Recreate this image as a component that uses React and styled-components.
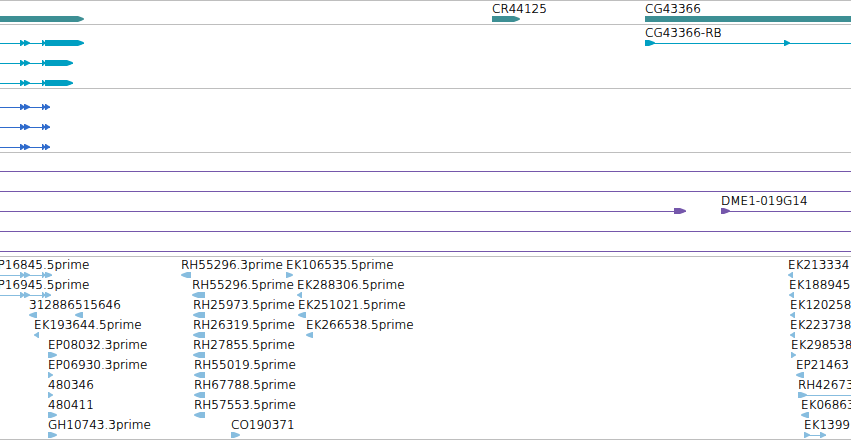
import React from "react";
import styled, { createGlobalStyle } from "styled-components";

const GlobalStyle = createGlobalStyle`
  body {
    margin: 0;
    background: #ffffff;
    overflow: hidden;
  }
`;

const Browser = styled.main`
  display: flex;
  flex-direction: column;
  border-bottom: 1px solid #bebebe;
  font-family: "DejaVu Sans", sans-serif;
  font-size: 12px;
  font-weight: 200;
  line-height: 14px;
  color: #000000;
`;

const Track = styled.section`
  padding: 1px 0 2px;
  border-top: 1px solid #bebebe;
  color: ${(p) => p.$color};

  &:last-child {
    padding-bottom: 1px;
  }
`;

const Lane = styled.div`
  position: relative;
  height: 20px;
  overflow: hidden;
`;

/* A feature sits at its sequence position along the lane. */
const Feature = styled.div`
  position: absolute;
  top: 0;
  display: flex;
  flex-direction: column;
`;

const Label = styled.span`
  height: 14px;
  color: #000000;
  text-shadow: 0 0 0 #000000;
  white-space: nowrap;
`;

const Glyph = styled.svg`
  display: block;
  flex: none;
  fill: currentColor;
`;

const FAR = 4000;

function exonPath(from, to, reverse) {
  const tip = Math.min(6, to - from - 1);
  if (reverse) {
    const neck = from + tip;
    return `M${to} 0H${neck}L${from + 2} 1.5L${from} 2.5V3.5L${from + 2} 4.5L${neck} 6H${to}Z`;
  }
  const neck = to - tip;
  return `M${from} 0H${neck}L${to - 2} 1.5L${to} 2.5V3.5L${to - 2} 4.5L${neck} 6H${from}Z`;
}

function Gene({ name, start, end, exons, reverse }) {
  const blocks = exons || [[start, end]];
  return (
    <Feature style={{ left: start }}>
      <Label>{name}</Label>
      <Glyph width={end - start} height="6" aria-hidden="true">
        {exons && <rect y="3" width={end - start} height="1" />}
        {blocks.map(([from, to]) => (
          <path key={from} d={exonPath(from - start, to - start, reverse)} />
        ))}
      </Glyph>
    </Feature>
  );
}

const f = (name, start, end, exons) => ({ name, start, end, exons });
const r = (name, start, end) => ({ name, start, end, reverse: true });
const line = () => f("", -40, FAR, []);

const mrna = (end) =>
  f("", -40, end, [[20, 25], [24, 30], [42, 46], [45, end]]);
const cds = () => mrna(50);

const tracks = [
  {
    id: "genes",
    color: "#3d8f94",
    lanes: [
      [f("", -40, 84), f("CR44125", 492, 520), f("CG43366", 645, FAR)],
    ],
  },
  {
    id: "transcripts",
    color: "#009fc2",
    lanes: [
      [mrna(84), f("CG43366-RB", 645, FAR, [[645, 655], [784, 790]])],
      [mrna(73)],
      [mrna(73)],
    ],
  },
  { id: "coding", color: "#2f6bcc", lanes: [[cds()], [cds()], [cds()]] },
  {
    id: "clones",
    color: "#7557ab",
    lanes: [
      [line()],
      [line()],
      [
        f("", -40, 686, [[674, 686]]),
        f("DME1-019G14", 721, FAR, [[721, 730]]),
      ],
      [line()],
      [line()],
    ],
  },
  {
    id: "ests",
    color: "#87bddf",
    lanes: [
      [
        f("EP16845.5prime", -10, 52, [[20, 25], [24, 30], [42, 46], [45, 52]]),
        r("RH55296.3prime", 181, 191),
        f("EK106535.5prime", 286, 293),
        r("EK213334", 788, 793),
      ],
      [
        f("EP16945.5prime", -10, 51, [[20, 25], [24, 30], [42, 46], [45, 51]]),
        r("RH55296.5prime", 192, 205),
        r("EK288306.5prime", 297, 302),
        r("EK188945", 789, 794),
      ],
      [
        r("312886", 29, 37),
        r("515646", 75, 83),
        r("RH25973.5prime", 193, 205),
        r("EK251021.5prime", 298, 306),
        r("EK120258", 790, 795),
      ],
      [
        r("EK193644.5prime", 34, 39),
        r("RH26319.5prime", 193, 205),
        r("EK266538.5prime", 306, 313),
        r("EK223738", 790, 795),
      ],
      [
        f("EP08032.3prime", 48, 57),
        r("RH27855.5prime", 193, 205),
        f("EK298538", 791, 796),
      ],
      [
        f("EP06930.3prime", 48, 53),
        r("RH55019.5prime", 194, 205),
        r("EP21463", 796, 804),
      ],
      [
        f("480346", 48, 53),
        r("RH67788.5prime", 194, 205),
        f("RH42673", 798, FAR, [[798, 807]]),
      ],
      [
        f("480411", 48, 57),
        r("RH57553.5prime", 194, 205),
        r("EK06863", 801, 809),
      ],
      [
        f("GH10743.3prime", 48, 57),
        f("CO190371", 231, 240),
        f("EK1399", 804, 826, [[804, 810], [820, 826]]),
      ],
    ],
  },
];

export default function App() {
  return (
    <>
      <GlobalStyle />
      <Browser>
        {tracks.map((track) => (
          <Track key={track.id} $color={track.color}>
            {track.lanes.map((lane, i) => (
              <Lane key={i}>
                {lane.map((item) => (
                  <Gene key={item.start} {...item} />
                ))}
              </Lane>
            ))}
          </Track>
        ))}
      </Browser>
    </>
  );
}
